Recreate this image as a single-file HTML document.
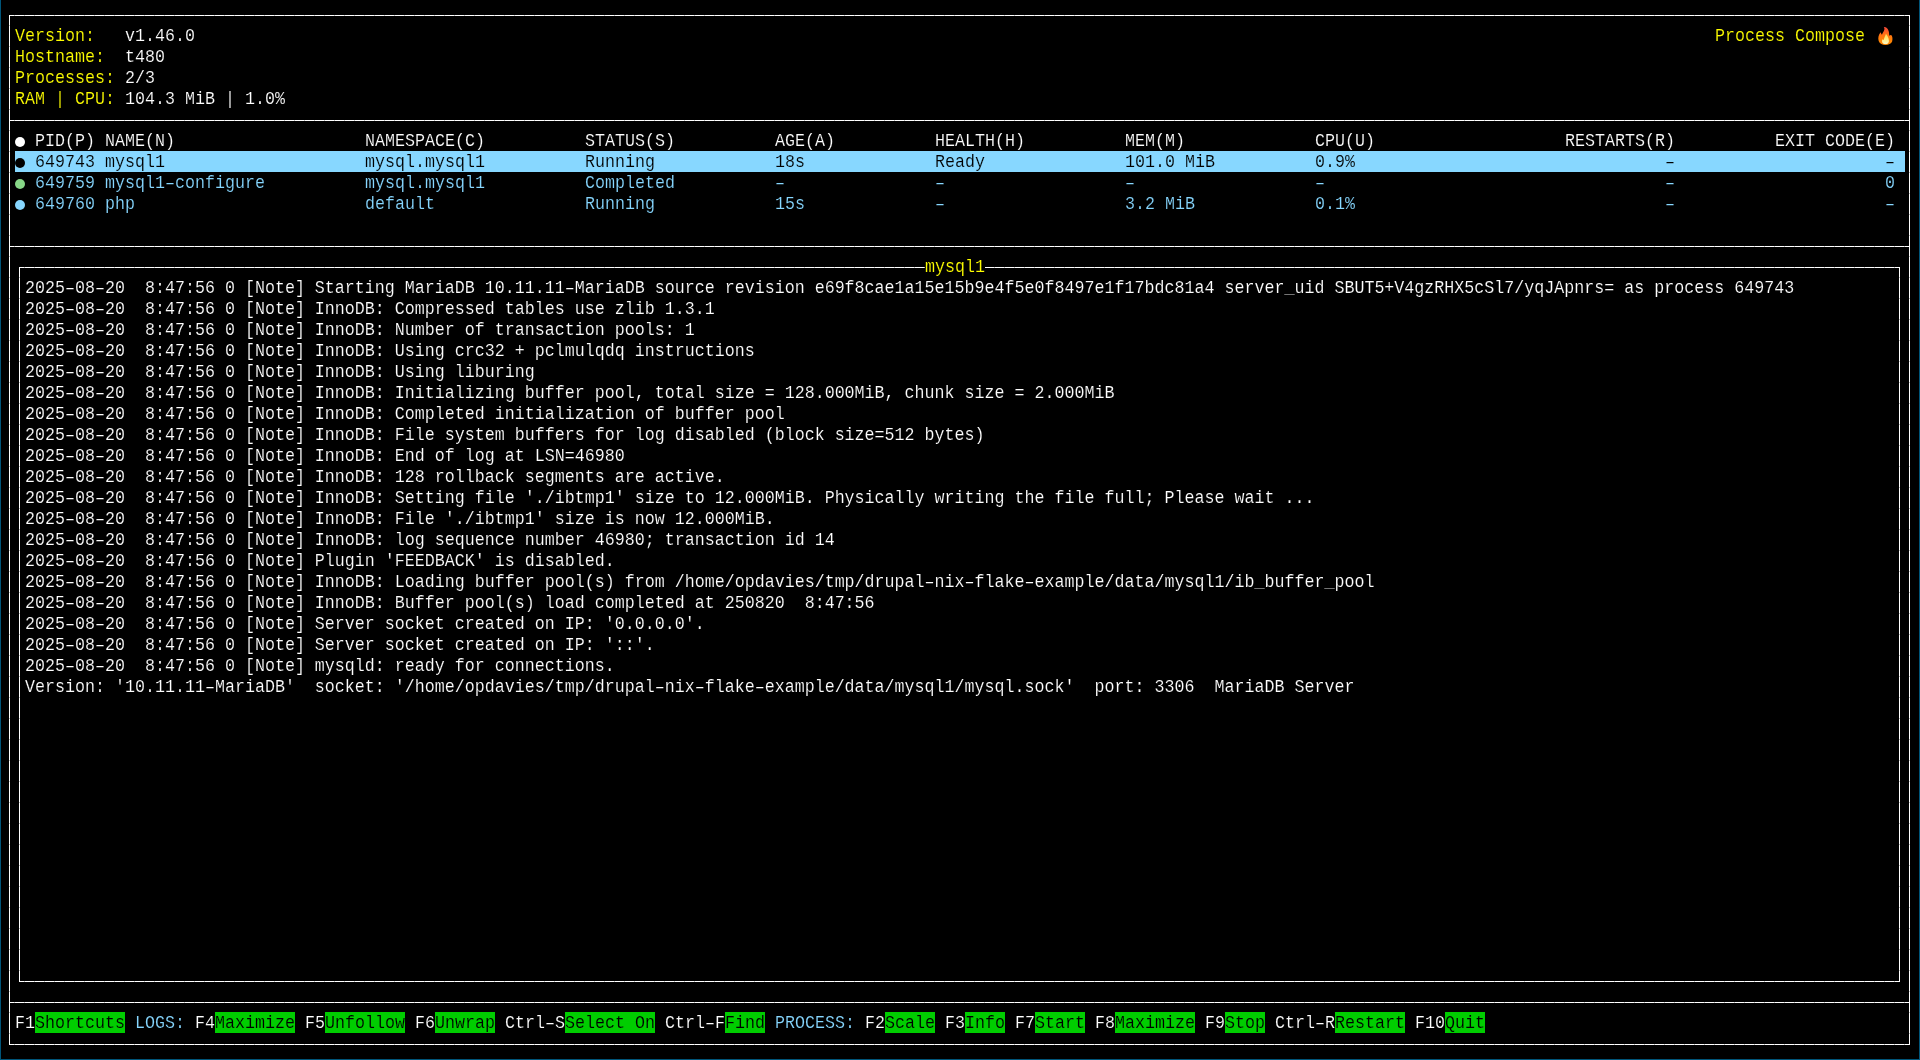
<!DOCTYPE html>
<html><head><meta charset="utf-8"><style>
html,body{margin:0;padding:0;background:#000;}
body{width:1920px;height:1060px;overflow:hidden;position:relative;font-family:"Liberation Mono",monospace;font-size:16.664px;}
.t{position:absolute;white-space:pre;height:21px;line-height:21px;transform:scaleY(1.085);transform-origin:0 15px;}
.b{position:absolute;height:21px;}
.l{position:absolute;}
.d{position:absolute;width:10px;height:10px;border-radius:50%;}
.fl{position:absolute;}
.edge{position:absolute;background:#00557a;}
</style></head><body>
<div id="root" style="position:absolute;left:0;top:0;width:1920px;height:1060px;will-change:transform">
<div class="edge" style="left:0;top:0;width:1px;height:1060px"></div>
<div class="edge" style="left:1919px;top:0;width:1px;height:1060px"></div>
<div class="edge" style="left:0;top:1059px;width:1920px;height:1px"></div>
<div class="b" style="left:15px;top:151px;width:1890px;background:#87d7ff"></div>
<div class="b" style="left:35px;top:1012px;width:90px;background:#00cd00"></div>
<div class="b" style="left:215px;top:1012px;width:80px;background:#00cd00"></div>
<div class="b" style="left:325px;top:1012px;width:80px;background:#00cd00"></div>
<div class="b" style="left:435px;top:1012px;width:60px;background:#00cd00"></div>
<div class="b" style="left:565px;top:1012px;width:90px;background:#00cd00"></div>
<div class="b" style="left:725px;top:1012px;width:40px;background:#00cd00"></div>
<div class="b" style="left:885px;top:1012px;width:50px;background:#00cd00"></div>
<div class="b" style="left:965px;top:1012px;width:40px;background:#00cd00"></div>
<div class="b" style="left:1035px;top:1012px;width:50px;background:#00cd00"></div>
<div class="b" style="left:1115px;top:1012px;width:80px;background:#00cd00"></div>
<div class="b" style="left:1225px;top:1012px;width:40px;background:#00cd00"></div>
<div class="b" style="left:1335px;top:1012px;width:70px;background:#00cd00"></div>
<div class="b" style="left:1445px;top:1012px;width:40px;background:#00cd00"></div>
<div class="l" style="left:9px;top:15px;width:1901px;height:1px;background:repeating-linear-gradient(to right,#ffffff 0 5px,#bbbbbb 5px 6px,#ffffff 6px 10px)"></div>
<div class="l" style="left:9px;top:1044px;width:1901px;height:1px;background:repeating-linear-gradient(to right,#ffffff 0 5px,#bbbbbb 5px 6px,#ffffff 6px 10px)"></div>
<div class="l" style="left:9px;top:15px;width:1px;height:1030px;background:repeating-linear-gradient(to bottom,#ffffff 0 10px,#bbbbbb 10px 11px,#ffffff 11px 21px)"></div>
<div class="l" style="left:1909px;top:15px;width:1px;height:1030px;background:repeating-linear-gradient(to bottom,#ffffff 0 10px,#bbbbbb 10px 11px,#ffffff 11px 21px)"></div>
<div class="l" style="left:9px;top:120px;width:1901px;height:1px;background:repeating-linear-gradient(to right,#ffffff 0 5px,#bbbbbb 5px 6px,#ffffff 6px 10px)"></div>
<div class="l" style="left:9px;top:246px;width:1901px;height:1px;background:repeating-linear-gradient(to right,#ffffff 0 5px,#bbbbbb 5px 6px,#ffffff 6px 10px)"></div>
<div class="l" style="left:9px;top:1002px;width:1901px;height:1px;background:repeating-linear-gradient(to right,#ffffff 0 5px,#bbbbbb 5px 6px,#ffffff 6px 10px)"></div>
<div class="t" style="left:15px;top:26px;color:#ffff00;-webkit-text-stroke:0.15px #000">Version:</div>
<div class="t" style="left:125px;top:26px;color:#ffffff;-webkit-text-stroke:0.15px #000">v1.46.0</div>
<div class="t" style="left:15px;top:47px;color:#ffff00;-webkit-text-stroke:0.15px #000">Hostname:</div>
<div class="t" style="left:125px;top:47px;color:#ffffff;-webkit-text-stroke:0.15px #000">t480</div>
<div class="t" style="left:15px;top:68px;color:#ffff00;-webkit-text-stroke:0.15px #000">Processes:</div>
<div class="t" style="left:125px;top:68px;color:#ffffff;-webkit-text-stroke:0.15px #000">2/3</div>
<div class="t" style="left:15px;top:89px;color:#ffff00;-webkit-text-stroke:0.15px #000">RAM | CPU:</div>
<div class="t" style="left:125px;top:89px;color:#ffffff;-webkit-text-stroke:0.15px #000">104.3 MiB | 1.0%</div>
<div class="t" style="left:1715px;top:26px;color:#ffff00;-webkit-text-stroke:0.15px #000">Process Compose</div>
<div class="d" style="left:15px;top:137px;background:#ffffff"></div>
<div class="t" style="left:35px;top:131px;color:#ffffff;-webkit-text-stroke:0.15px #000">PID(P)</div>
<div class="t" style="left:105px;top:131px;color:#ffffff;-webkit-text-stroke:0.15px #000">NAME(N)</div>
<div class="t" style="left:365px;top:131px;color:#ffffff;-webkit-text-stroke:0.15px #000">NAMESPACE(C)</div>
<div class="t" style="left:585px;top:131px;color:#ffffff;-webkit-text-stroke:0.15px #000">STATUS(S)</div>
<div class="t" style="left:775px;top:131px;color:#ffffff;-webkit-text-stroke:0.15px #000">AGE(A)</div>
<div class="t" style="left:935px;top:131px;color:#ffffff;-webkit-text-stroke:0.15px #000">HEALTH(H)</div>
<div class="t" style="left:1125px;top:131px;color:#ffffff;-webkit-text-stroke:0.15px #000">MEM(M)</div>
<div class="t" style="left:1315px;top:131px;color:#ffffff;-webkit-text-stroke:0.15px #000">CPU(U)</div>
<div class="t" style="left:1565px;top:131px;color:#ffffff;-webkit-text-stroke:0.15px #000">RESTARTS(R)</div>
<div class="t" style="left:1775px;top:131px;color:#ffffff;-webkit-text-stroke:0.15px #000">EXIT CODE(E)</div>
<div class="d" style="left:15px;top:158px;background:#000000"></div>
<div class="t" style="left:35px;top:152px;color:#000000;-webkit-text-stroke:0.15px #87d7ff">649743</div>
<div class="t" style="left:105px;top:152px;color:#000000;-webkit-text-stroke:0.15px #87d7ff">mysql1</div>
<div class="t" style="left:365px;top:152px;color:#000000;-webkit-text-stroke:0.15px #87d7ff">mysql.mysql1</div>
<div class="t" style="left:585px;top:152px;color:#000000;-webkit-text-stroke:0.15px #87d7ff">Running</div>
<div class="t" style="left:775px;top:152px;color:#000000;-webkit-text-stroke:0.15px #87d7ff">18s</div>
<div class="t" style="left:935px;top:152px;color:#000000;-webkit-text-stroke:0.15px #87d7ff">Ready</div>
<div class="t" style="left:1125px;top:152px;color:#000000;-webkit-text-stroke:0.15px #87d7ff">101.0 MiB</div>
<div class="t" style="left:1315px;top:152px;color:#000000;-webkit-text-stroke:0.15px #87d7ff">0.9%</div>
<div class="t" style="left:1665px;top:152px;color:#000000;-webkit-text-stroke:0.15px #87d7ff">–</div>
<div class="t" style="left:1885px;top:152px;color:#000000;-webkit-text-stroke:0.15px #87d7ff">–</div>
<div class="d" style="left:15px;top:179px;background:#87d787"></div>
<div class="t" style="left:35px;top:173px;color:#87d7ff;-webkit-text-stroke:0.15px #000">649759</div>
<div class="t" style="left:105px;top:173px;color:#87d7ff;-webkit-text-stroke:0.15px #000">mysql1–configure</div>
<div class="t" style="left:365px;top:173px;color:#87d7ff;-webkit-text-stroke:0.15px #000">mysql.mysql1</div>
<div class="t" style="left:585px;top:173px;color:#87d7ff;-webkit-text-stroke:0.15px #000">Completed</div>
<div class="t" style="left:775px;top:173px;color:#87d7ff;-webkit-text-stroke:0.15px #000">–</div>
<div class="t" style="left:935px;top:173px;color:#87d7ff;-webkit-text-stroke:0.15px #000">–</div>
<div class="t" style="left:1125px;top:173px;color:#87d7ff;-webkit-text-stroke:0.15px #000">–</div>
<div class="t" style="left:1315px;top:173px;color:#87d7ff;-webkit-text-stroke:0.15px #000">–</div>
<div class="t" style="left:1665px;top:173px;color:#87d7ff;-webkit-text-stroke:0.15px #000">–</div>
<div class="t" style="left:1885px;top:173px;color:#87d7ff;-webkit-text-stroke:0.15px #000">0</div>
<div class="d" style="left:15px;top:200px;background:#87d7ff"></div>
<div class="t" style="left:35px;top:194px;color:#87d7ff;-webkit-text-stroke:0.15px #000">649760</div>
<div class="t" style="left:105px;top:194px;color:#87d7ff;-webkit-text-stroke:0.15px #000">php</div>
<div class="t" style="left:365px;top:194px;color:#87d7ff;-webkit-text-stroke:0.15px #000">default</div>
<div class="t" style="left:585px;top:194px;color:#87d7ff;-webkit-text-stroke:0.15px #000">Running</div>
<div class="t" style="left:775px;top:194px;color:#87d7ff;-webkit-text-stroke:0.15px #000">15s</div>
<div class="t" style="left:935px;top:194px;color:#87d7ff;-webkit-text-stroke:0.15px #000">–</div>
<div class="t" style="left:1125px;top:194px;color:#87d7ff;-webkit-text-stroke:0.15px #000">3.2 MiB</div>
<div class="t" style="left:1315px;top:194px;color:#87d7ff;-webkit-text-stroke:0.15px #000">0.1%</div>
<div class="t" style="left:1665px;top:194px;color:#87d7ff;-webkit-text-stroke:0.15px #000">–</div>
<div class="t" style="left:1885px;top:194px;color:#87d7ff;-webkit-text-stroke:0.15px #000">–</div>
<div class="l" style="left:19px;top:267px;width:906px;height:1px;background:repeating-linear-gradient(to right,#ffffff 0 5px,#bbbbbb 5px 6px,#ffffff 6px 10px)"></div>
<div class="l" style="left:985px;top:267px;width:915px;height:1px;background:repeating-linear-gradient(to right,#ffffff 0 9px,#bbbbbb 9px 10px,#ffffff 10px 10px)"></div>
<div class="t" style="left:925px;top:257px;color:#ffff00;-webkit-text-stroke:0.15px #000">mysql1</div>
<div class="l" style="left:19px;top:981px;width:1881px;height:1px;background:repeating-linear-gradient(to right,#ffffff 0 5px,#bbbbbb 5px 6px,#ffffff 6px 10px)"></div>
<div class="l" style="left:19px;top:267px;width:1px;height:715px;background:repeating-linear-gradient(to bottom,#ffffff 0 10px,#bbbbbb 10px 11px,#ffffff 11px 21px)"></div>
<div class="l" style="left:1899px;top:267px;width:1px;height:715px;background:repeating-linear-gradient(to bottom,#ffffff 0 10px,#bbbbbb 10px 11px,#ffffff 11px 21px)"></div>
<div class="t" style="left:25px;top:278px;color:#ffffff;-webkit-text-stroke:0.15px #000">2025–08–20  8:47:56 0 [Note] Starting MariaDB 10.11.11–MariaDB source revision e69f8cae1a15e15b9e4f5e0f8497e1f17bdc81a4 server_uid SBUT5+V4gzRHX5cSl7/yqJApnrs= as process 649743</div>
<div class="t" style="left:25px;top:299px;color:#ffffff;-webkit-text-stroke:0.15px #000">2025–08–20  8:47:56 0 [Note] InnoDB: Compressed tables use zlib 1.3.1</div>
<div class="t" style="left:25px;top:320px;color:#ffffff;-webkit-text-stroke:0.15px #000">2025–08–20  8:47:56 0 [Note] InnoDB: Number of transaction pools: 1</div>
<div class="t" style="left:25px;top:341px;color:#ffffff;-webkit-text-stroke:0.15px #000">2025–08–20  8:47:56 0 [Note] InnoDB: Using crc32 + pclmulqdq instructions</div>
<div class="t" style="left:25px;top:362px;color:#ffffff;-webkit-text-stroke:0.15px #000">2025–08–20  8:47:56 0 [Note] InnoDB: Using liburing</div>
<div class="t" style="left:25px;top:383px;color:#ffffff;-webkit-text-stroke:0.15px #000">2025–08–20  8:47:56 0 [Note] InnoDB: Initializing buffer pool, total size = 128.000MiB, chunk size = 2.000MiB</div>
<div class="t" style="left:25px;top:404px;color:#ffffff;-webkit-text-stroke:0.15px #000">2025–08–20  8:47:56 0 [Note] InnoDB: Completed initialization of buffer pool</div>
<div class="t" style="left:25px;top:425px;color:#ffffff;-webkit-text-stroke:0.15px #000">2025–08–20  8:47:56 0 [Note] InnoDB: File system buffers for log disabled (block size=512 bytes)</div>
<div class="t" style="left:25px;top:446px;color:#ffffff;-webkit-text-stroke:0.15px #000">2025–08–20  8:47:56 0 [Note] InnoDB: End of log at LSN=46980</div>
<div class="t" style="left:25px;top:467px;color:#ffffff;-webkit-text-stroke:0.15px #000">2025–08–20  8:47:56 0 [Note] InnoDB: 128 rollback segments are active.</div>
<div class="t" style="left:25px;top:488px;color:#ffffff;-webkit-text-stroke:0.15px #000">2025–08–20  8:47:56 0 [Note] InnoDB: Setting file './ibtmp1' size to 12.000MiB. Physically writing the file full; Please wait ...</div>
<div class="t" style="left:25px;top:509px;color:#ffffff;-webkit-text-stroke:0.15px #000">2025–08–20  8:47:56 0 [Note] InnoDB: File './ibtmp1' size is now 12.000MiB.</div>
<div class="t" style="left:25px;top:530px;color:#ffffff;-webkit-text-stroke:0.15px #000">2025–08–20  8:47:56 0 [Note] InnoDB: log sequence number 46980; transaction id 14</div>
<div class="t" style="left:25px;top:551px;color:#ffffff;-webkit-text-stroke:0.15px #000">2025–08–20  8:47:56 0 [Note] Plugin 'FEEDBACK' is disabled.</div>
<div class="t" style="left:25px;top:572px;color:#ffffff;-webkit-text-stroke:0.15px #000">2025–08–20  8:47:56 0 [Note] InnoDB: Loading buffer pool(s) from /home/opdavies/tmp/drupal–nix–flake–example/data/mysql1/ib_buffer_pool</div>
<div class="t" style="left:25px;top:593px;color:#ffffff;-webkit-text-stroke:0.15px #000">2025–08–20  8:47:56 0 [Note] InnoDB: Buffer pool(s) load completed at 250820  8:47:56</div>
<div class="t" style="left:25px;top:614px;color:#ffffff;-webkit-text-stroke:0.15px #000">2025–08–20  8:47:56 0 [Note] Server socket created on IP: '0.0.0.0'.</div>
<div class="t" style="left:25px;top:635px;color:#ffffff;-webkit-text-stroke:0.15px #000">2025–08–20  8:47:56 0 [Note] Server socket created on IP: '::'.</div>
<div class="t" style="left:25px;top:656px;color:#ffffff;-webkit-text-stroke:0.15px #000">2025–08–20  8:47:56 0 [Note] mysqld: ready for connections.</div>
<div class="t" style="left:25px;top:677px;color:#ffffff;-webkit-text-stroke:0.15px #000">Version: '10.11.11–MariaDB'  socket: '/home/opdavies/tmp/drupal–nix–flake–example/data/mysql1/mysql.sock'  port: 3306  MariaDB Server</div>
<div class="t" style="left:15px;top:1013px;color:#ffffff;-webkit-text-stroke:0.15px #000">F1</div>
<div class="t" style="left:35px;top:1013px;color:#000;-webkit-text-stroke:0.15px #00cd00">Shortcuts</div>
<div class="t" style="left:125px;top:1013px;color:#87d7ff;-webkit-text-stroke:0.15px #000"> LOGS:</div>
<div class="t" style="left:185px;top:1013px;color:#ffffff;-webkit-text-stroke:0.15px #000"> F4</div>
<div class="t" style="left:215px;top:1013px;color:#000;-webkit-text-stroke:0.15px #00cd00">Maximize</div>
<div class="t" style="left:295px;top:1013px;color:#ffffff;-webkit-text-stroke:0.15px #000"> F5</div>
<div class="t" style="left:325px;top:1013px;color:#000;-webkit-text-stroke:0.15px #00cd00">Unfollow</div>
<div class="t" style="left:405px;top:1013px;color:#ffffff;-webkit-text-stroke:0.15px #000"> F6</div>
<div class="t" style="left:435px;top:1013px;color:#000;-webkit-text-stroke:0.15px #00cd00">Unwrap</div>
<div class="t" style="left:495px;top:1013px;color:#ffffff;-webkit-text-stroke:0.15px #000"> Ctrl–S</div>
<div class="t" style="left:565px;top:1013px;color:#000;-webkit-text-stroke:0.15px #00cd00">Select On</div>
<div class="t" style="left:655px;top:1013px;color:#ffffff;-webkit-text-stroke:0.15px #000"> Ctrl–F</div>
<div class="t" style="left:725px;top:1013px;color:#000;-webkit-text-stroke:0.15px #00cd00">Find</div>
<div class="t" style="left:765px;top:1013px;color:#87d7ff;-webkit-text-stroke:0.15px #000"> PROCESS:</div>
<div class="t" style="left:855px;top:1013px;color:#ffffff;-webkit-text-stroke:0.15px #000"> F2</div>
<div class="t" style="left:885px;top:1013px;color:#000;-webkit-text-stroke:0.15px #00cd00">Scale</div>
<div class="t" style="left:935px;top:1013px;color:#ffffff;-webkit-text-stroke:0.15px #000"> F3</div>
<div class="t" style="left:965px;top:1013px;color:#000;-webkit-text-stroke:0.15px #00cd00">Info</div>
<div class="t" style="left:1005px;top:1013px;color:#ffffff;-webkit-text-stroke:0.15px #000"> F7</div>
<div class="t" style="left:1035px;top:1013px;color:#000;-webkit-text-stroke:0.15px #00cd00">Start</div>
<div class="t" style="left:1085px;top:1013px;color:#ffffff;-webkit-text-stroke:0.15px #000"> F8</div>
<div class="t" style="left:1115px;top:1013px;color:#000;-webkit-text-stroke:0.15px #00cd00">Maximize</div>
<div class="t" style="left:1195px;top:1013px;color:#ffffff;-webkit-text-stroke:0.15px #000"> F9</div>
<div class="t" style="left:1225px;top:1013px;color:#000;-webkit-text-stroke:0.15px #00cd00">Stop</div>
<div class="t" style="left:1265px;top:1013px;color:#ffffff;-webkit-text-stroke:0.15px #000"> Ctrl–R</div>
<div class="t" style="left:1335px;top:1013px;color:#000;-webkit-text-stroke:0.15px #00cd00">Restart</div>
<div class="t" style="left:1405px;top:1013px;color:#ffffff;-webkit-text-stroke:0.15px #000"> F10</div>
<div class="t" style="left:1445px;top:1013px;color:#000;-webkit-text-stroke:0.15px #00cd00">Quit</div>
<svg class="fl" width="40" height="30" viewBox="0 0 1413 1060" style="left:1860px;top:20px">
<defs>
<linearGradient id="fo" x1="0" y1="0" x2="0" y2="1"><stop offset="0" stop-color="#f0443a"/><stop offset="0.35" stop-color="#ff6a1a"/><stop offset="0.6" stop-color="#ff7d0a"/><stop offset="1" stop-color="#ff8a00"/></linearGradient>
<linearGradient id="fi" x1="0" y1="0" x2="0" y2="1"><stop offset="0" stop-color="#ffd84a"/><stop offset="0.6" stop-color="#ffef8a"/><stop offset="1" stop-color="#fff6c8"/></linearGradient>
</defs>
<path d="M840 250 C900 235 985 290 1012 390 C1028 450 1030 510 1035 555 C1060 540 1090 525 1110 540 C1145 580 1160 660 1135 760 C1105 840 1010 880 900 882 C790 880 690 840 660 740 C630 640 650 520 730 430 C745 470 755 500 775 520 C800 450 850 400 862 330 C866 300 858 270 840 250 Z" fill="url(#fo)"/>
<path d="M915 490 C960 540 1010 620 1022 720 C1030 800 980 850 900 852 C820 850 780 810 778 750 C776 715 790 690 800 680 C815 700 825 705 838 705 C850 640 900 560 915 490 Z" fill="url(#fi)"/>
</svg>
</div>
</body></html>
